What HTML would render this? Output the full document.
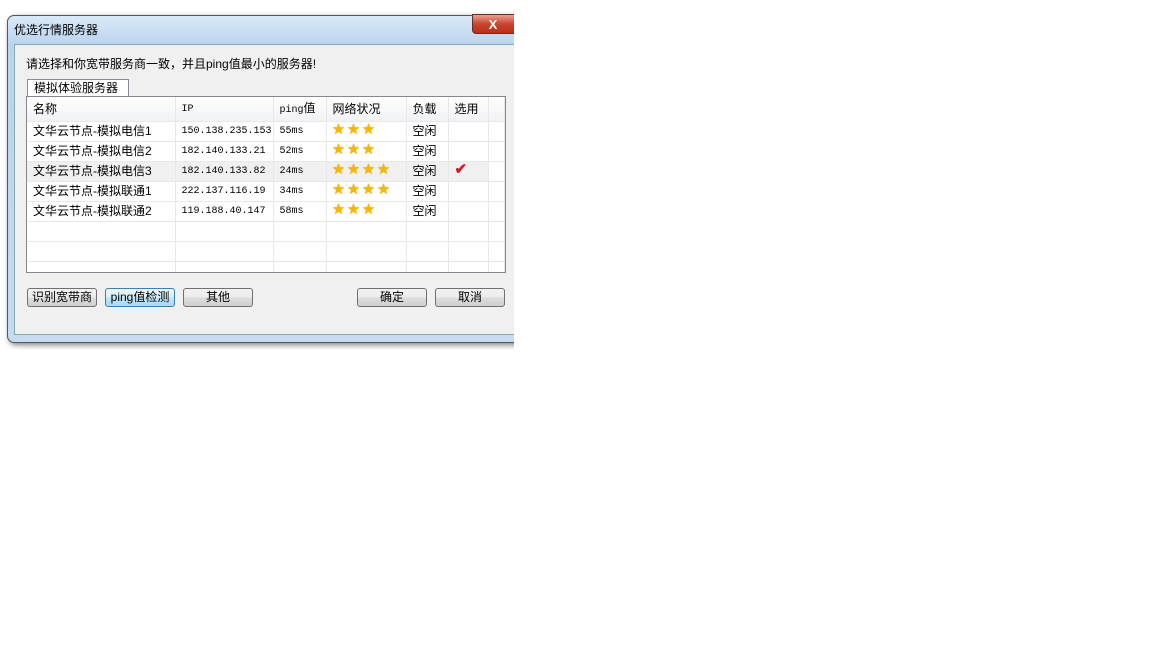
<!DOCTYPE html><html><head><meta charset="utf-8"><style>
body{margin:0;width:1152px;height:648px;background:#fff;position:relative;overflow:hidden;font-family:"Liberation Sans","Noto Sans CJK SC",sans-serif;font-size:12px;color:#000}
.a{position:absolute}
.clip{position:absolute;left:0;top:0;width:514px;height:350px;overflow:hidden}
.win{left:7px;top:15px;width:540px;height:326px;background:linear-gradient(#dbe9f7,#b9d3ee 30px,#c5dbf1);border:1px solid #555;border-radius:7px 0 0 7px;box-shadow:2px 2px 6px rgba(0,0,0,.5)}
.cl{left:14px;top:44px;width:520px;height:289px;background:#f0f0f0;border:1px solid #8aa;border-right:none}
.btn{position:absolute;top:288px;height:17px;width:68px;border:1px solid #707070;border-radius:3px;background:linear-gradient(#f2f2f2,#ebebeb 50%,#dddddd 50%,#cfcfcf);text-align:center;line-height:17px;font-size:12px}
.st{color:#f5b800;font-size:12px;letter-spacing:3px;text-shadow:0 0 1px #c80;vertical-align:top;line-height:14px}
table{border-collapse:collapse;width:478px;table-layout:fixed}
td{padding:0 0 0 6px;height:19px;line-height:19px;border-right:1px solid #e8e8e8;border-bottom:1px solid #e8e8e8;white-space:nowrap;overflow:hidden;font-size:12px;box-sizing:border-box}
tr{height:20px}
.m{font-family:"Liberation Mono",monospace;font-size:10px}
</style></head><body>
<div class="clip">
<div class="a win"></div>
<div class="a" style="left:14px;top:21px;font-size:12px;color:#000">优选行情服务器</div>
<div class="a" style="left:472px;top:14px;width:48px;height:20px;background:linear-gradient(#e8a090,#c9452f 50%,#b7301c);border:1px solid #6d2a20;border-radius:0 0 4px 4px;color:#fff;text-align:center;font-weight:bold;line-height:20px;font-size:13px;padding-right:6px;box-sizing:border-box">X</div>
<div class="a cl"></div>
<div class="a" style="left:26px;top:55px">请选择和你宽带服务商一致，并且ping值最小的服务器!</div>
<div class="a" style="left:27px;top:79px;width:102px;height:17px;background:#fff;border:1px solid #898c95;border-bottom:none;line-height:17px;padding-left:6px;box-sizing:border-box">模拟体验服务器</div>
<div class="a" style="left:26px;top:96px;width:478px;height:175px;background:#fff;border:1px solid #828790;overflow:hidden">
<table>
<colgroup><col style="width:148px"><col style="width:98px"><col style="width:53px"><col style="width:80px"><col style="width:42px"><col style="width:40px"><col></colgroup>
<tr style="background:linear-gradient(#fff,#f0f1f3);height:24px"><td style="height:24px;line-height:24px">名称</td><td class="m">IP</td><td class="m">ping<span style="font-family:'Noto Sans CJK SC';font-size:12px">值</span></td><td>网络状况</td><td>负载</td><td>选用</td><td></td></tr>
<tr><td>文华云节点-模拟电信1</td><td class="m">150.138.235.153</td><td class="m">55ms</td><td class="st">★★★</td><td>空闲</td><td></td><td></td></tr>
<tr><td>文华云节点-模拟电信2</td><td class="m">182.140.133.21</td><td class="m">52ms</td><td class="st">★★★</td><td>空闲</td><td></td><td></td></tr>
<tr style="background:#f0f0f0"><td>文华云节点-模拟电信3</td><td class="m">182.140.133.82</td><td class="m">24ms</td><td class="st">★★★★</td><td>空闲</td><td style="color:#d0182c;font-size:15px;font-weight:bold;line-height:16px;vertical-align:top">✔</td><td style="background:#fff"></td></tr>
<tr><td>文华云节点-模拟联通1</td><td class="m">222.137.116.19</td><td class="m">34ms</td><td class="st">★★★★</td><td>空闲</td><td></td><td></td></tr>
<tr><td>文华云节点-模拟联通2</td><td class="m">119.188.40.147</td><td class="m">58ms</td><td class="st">★★★</td><td>空闲</td><td></td><td></td></tr>
<tr><td></td><td></td><td></td><td></td><td></td><td></td><td></td></tr>
<tr><td></td><td></td><td></td><td></td><td></td><td></td><td></td></tr>
<tr><td></td><td></td><td></td><td></td><td></td><td></td><td></td></tr>
</table></div>
<div class="btn" style="left:27px">识别宽带商</div>
<div class="btn" style="left:105px;border-color:#3c7fb1;background:linear-gradient(#eaf6fd,#d9f0fc 50%,#bee6fd 50%,#a7d9f5)">ping值检测</div>
<div class="btn" style="left:183px">其他</div>
<div class="btn" style="left:357px">确定</div>
<div class="btn" style="left:435px">取消</div>
</div>
</body></html>
